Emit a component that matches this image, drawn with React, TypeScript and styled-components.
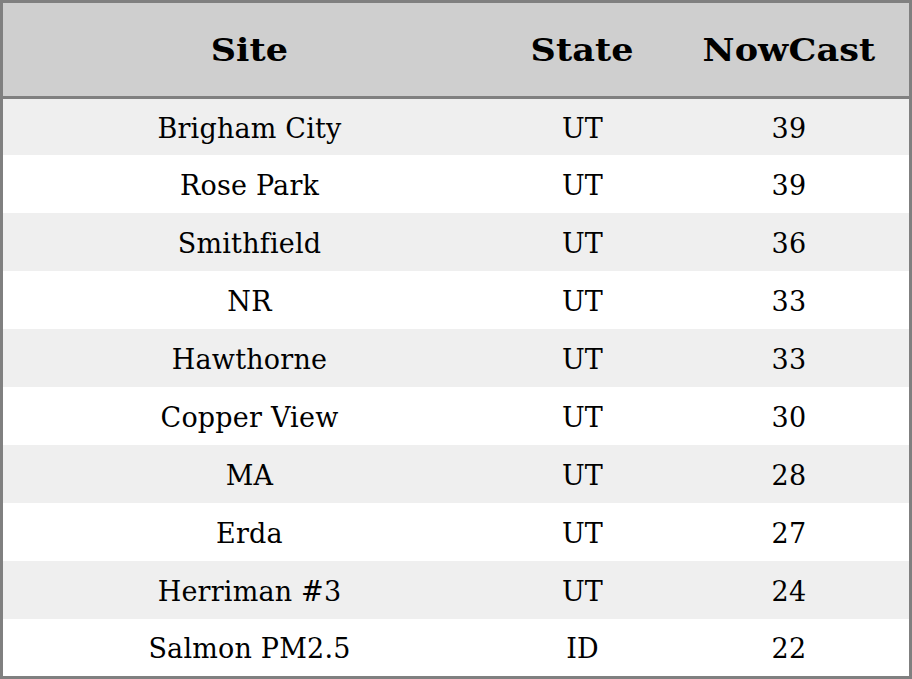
import React from "react";
import styled, { createGlobalStyle } from "styled-components";

const GlobalStyle = createGlobalStyle`
  html, body { margin: 0; padding: 0; background: #ffffff; }
  * { box-sizing: border-box; }
`;

const Table = styled.div`
  width: 912px;
  height: 679px;
  border: 3px solid #808080;
  font-family: "DejaVu Serif", serif;
  color: #000;
  display: flex;
  flex-direction: column;
  overflow: hidden;
  font-variant-ligatures: none;
`;

const Grid = styled.div`
  display: grid;
  grid-template-columns: 493px 173px 240px;
  align-items: center;
`;

const HeaderRow = styled(Grid)`
  height: 96px;
  background: #cfcfcf;
  border-bottom: 3px solid #808080;
`;

const HeaderCell = styled.div`
  text-align: center;
  font-weight: bold;
  font-size: 32px;
  line-height: 1;
`;

const HeaderText = styled.span`
  display: inline-block;
  transform: scaleX(1.095);
  letter-spacing: 0.1px;
`;

const Row = styled(Grid)<{ $striped: boolean }>`
  height: 58px;
  background: ${(p) => (p.$striped ? "#efefef" : "#ffffff")};
  &:first-child { height: 56px; }
  &:last-child { height: 57px; }
`;

const Cell = styled.div`
  text-align: center;
  font-size: 27px;
  letter-spacing: 0.2px;
  line-height: 1;
  padding-top: 2px;
`;

const Body = styled.div`
  display: flex;
  flex-direction: column;
`;

const data: [string, string, number][] = [
  ["Brigham City", "UT", 39],
  ["Rose Park", "UT", 39],
  ["Smithfield", "UT", 36],
  ["NR", "UT", 33],
  ["Hawthorne", "UT", 33],
  ["Copper View", "UT", 30],
  ["MA", "UT", 28],
  ["Erda", "UT", 27],
  ["Herriman #3", "UT", 24],
  ["Salmon PM2.5", "ID", 22],
];

export default function App() {
  return (
    <>
      <GlobalStyle />
      <Table>
        <HeaderRow>
          <HeaderCell><HeaderText>Site</HeaderText></HeaderCell>
          <HeaderCell><HeaderText>State</HeaderText></HeaderCell>
          <HeaderCell><HeaderText>NowCast</HeaderText></HeaderCell>
        </HeaderRow>
        <Body>
          {data.map(([site, state, v], i) => (
            <Row key={site} $striped={i % 2 === 0}>
              <Cell>{site}</Cell>
              <Cell>{state}</Cell>
              <Cell>{v}</Cell>
            </Row>
          ))}
        </Body>
      </Table>
    </>
  );
}
